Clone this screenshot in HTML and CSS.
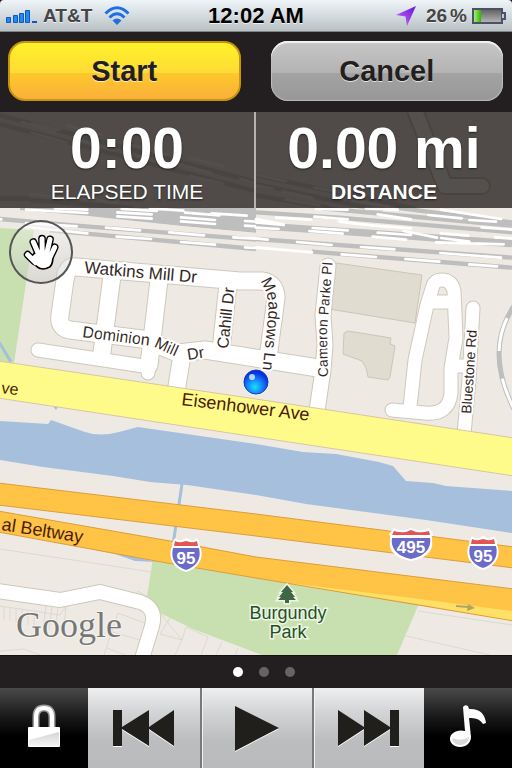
FILE: index.html
```
<!DOCTYPE html>
<html lang="en">
  <head>
    <meta charset="UTF-8" />
    <meta name="viewport" content="width=device-width, initial-scale=1.0" />
    <title>Run Tracker</title>
    <link rel="stylesheet" href="styles.css">
  </head>
  <body>
    <header class="status-bar">
      <div class="status-left">
        <svg class="signal" width="31" height="15" viewBox="0 0 31 15" aria-hidden="true">
          <g fill="#1b8cf5" stroke="#1455c0">
            <path d="M.5 9.5h4v5h-4zM7.500 7.500h4v7h-4zM13.500 5.500h4v9h-4zM19.500 2.500h4v12h-4z" />
          </g>
          <path fill="#1455c0" d="M26 13h5v2h-5z" />
        </svg>
        <span class="carrier">AT&amp;T</span>
        <svg class="wifi" width="26" height="20" viewBox="0 0 26 20" aria-hidden="true">
          <g fill="none" stroke="#1d6fe6" stroke-width="3">
            <path d="M1.500 7.500Q13-4 24.500 7.500" />
            <path d="M5.500 11.500Q13 4 20.500 11.500" />
          </g>
          <path fill="#1d6fe6" d="M8.500 14.500Q13 10.500 17.500 14.500L13 19z" />
        </svg>
      </div>
      <time class="clock">12:02 AM</time>
      <div class="status-right">
        <svg class="location" width="20" height="20" viewBox="0 0 20 20" aria-hidden="true">
          <defs>
            <linearGradient id="loc" x1="1" y1="0" x2="0" y2="1">
              <stop offset="0" stop-color="#6a12d8" />
              <stop offset="1" stop-color="#c574f7" />
            </linearGradient>
          </defs>
          <path fill="url(#loc)" d="M20 0L11 20L9.500 10.500L0 9z" />
        </svg>
        <span class="percent"><span>26</span><span>%</span></span>
        <svg class="battery" width="34" height="16" viewBox="0 0 34 16" aria-hidden="true">
          <defs>
            <linearGradient id="cell" x1="0" y1="0" x2="0" y2="1">
              <stop offset="0" stop-color="#5e5e5e" />
              <stop offset="1" stop-color="#b9b9b9" />
            </linearGradient>
            <linearGradient id="charge">
              <stop offset="0" stop-color="#a4ec70" />
              <stop offset="1" stop-color="#2fb60c" />
            </linearGradient>
          </defs>
          <rect x="1" y="1" width="29" height="14" fill="url(#cell)" stroke="#4b5267" stroke-width="2" />
          <rect x="2" y="2" width="7" height="12" fill="url(#charge)" />
          <path d="M30 5h3v6h-3" fill="#c3c9d2" stroke="#4b5267" stroke-width="2" />
        </svg>
      </div>
    </header>

    <nav class="actions">
      <button class="action start" type="button">Start</button>
      <button class="action cancel" type="button">Cancel</button>
    </nav>

    <main class="map">
      <svg class="map-canvas" viewBox="0 112 512 543" role="img" aria-label="Map">
        <defs>
          <radialGradient id="ball" cx="45%" cy="70%" r="60%">
            <stop offset="0" stop-color="#19e0ff" />
            <stop offset=".5" stop-color="#1487ff" />
            <stop offset="1" stop-color="#0730e0" />
          </radialGradient>
          <path id="dominion" d="M82 337L152 346L194 365" />
          <path id="meadows" d="M260 281Q271 297 268 318L261 384" />
          <path id="cameron" d="M328 377L327 330L333 255" />
          <symbol id="shield" viewBox="0 0 32 34">
            <path fill="#fff" d="M5 0Q8 3 12 2L16 0L20 2Q24 3 27 0L30 5Q29 8 31 11C34 23 26 31 16 34C6 31-2 23 1 11Q3 8 2 5z" />
            <path fill="#e25553" d="M5 3Q9 5 12 4L16 3L20 4Q23 5 27 3L28 8H4z" />
            <path fill="#6b6cca" d="M3 10H29C32 22 25 29 16 32C7 29 0 22 3 10z" />
          </symbol>
        </defs>

        <rect y="112" width="512" height="543" fill="#eeeae3" />

        <!-- Parks -->
        <path class="park" d="M0 228L34 230L14 363L0 361zM153 558L418 598V606L397 655H262L193 629L160 613L147 597z" />

        <!-- Rail yard under the stats panel -->
        <svg x="0" y="108" width="256" height="130" viewBox="0 0 768 390" overflow="visible">
          <path class="rail faint" d="M0 22L768 222M0 48L768 250M0 272H90M90 276L400 300" stroke-width="14" />
          <path class="dash faint" d="M97 46L178 66M200 52L305 80M95 74L200 104M65 42L165 72M240 96L340 128M400 112L500 140M570 150L670 175M530 166L632 194M570 204L670 226M410 145L480 165M720 212L768 226M90 258L200 270M230 270L350 284" />
        </svg>
        <svg x="256" y="108" width="256" height="130" viewBox="0 0 768 390" overflow="visible">
          <path class="rail faint" d="M0 202L480 302M0 228L380 310M0 262L220 300" stroke-width="14" />
          <path class="dash faint" d="M0 200L90 220M175 238L270 256M0 232L50 242M80 250L170 270M90 275L190 292M280 276L400 296" />
        </svg>

        <!-- Rail yard -->
        <svg x="0" y="205" width="256" height="190" viewBox="0 0 768 570" overflow="visible">
          <path class="rail-bed" d="M60 8H768V85L540 62L350 42L260 32L60 15z" />
          <path class="rail" d="M0 42L230 62L768 104M150 76L768 132" stroke-width="13" />
          <path class="edge" d="M0 28L260 44L540 68L768 88" stroke="#eeeae3" stroke-width="10" />
          <path class="dash" d="M78 14L262 24M165 10L262 14M352 22L455 28M352 34L455 41M365 12L470 18M555 23L658 31M543 37L645 45M543 49L645 57M450 10L550 17M635 25L740 32M735 48L768 50M735 62L768 64M78 54L230 64M0 43H4M318 68L420 76M508 82L612 91M700 97L768 101M78 66L262 85M350 95L453 102M543 111L645 119M735 127L768 129" />
        </svg>
        <svg x="256" y="205" width="256" height="190" viewBox="0 0 768 570" overflow="visible">
          <path class="rail" d="M0 22L250 38L768 82M200 10L768 62M0 102L768 158M168 140L768 188M420 8L768 52" stroke-width="13" />
          <path class="rail" d="M0 62L360 86L768 116" stroke-width="22" />
          <path class="dash" d="M60 38L165 44M175 35L275 43M365 28L465 43M555 14L735 42M640 45L720 50M517 30L617 40M677 67L768 74M555 85L637 92M718 97L768 100M555 99L640 110M540 112L743 118M365 83L465 90M350 95L450 104M443 78L543 98M160 78L260 86M170 69L275 76M250 50L355 62M355 62L465 70M0 42L83 58M0 52L83 60M0 68L68 72M0 100L35 104M123 111L227 120M315 126L415 133M553 144L735 158M0 127L65 133M65 133L168 142M257 148L360 156M448 162L550 170M640 178L723 184M180 12L275 14M330 10L425 14" />
        </svg>
        <path fill="none" stroke="#bebebe" stroke-width="5" d="M514 306Q484 350 514 409" />
        <path fill="none" stroke="#fff" stroke-width="3" stroke-dasharray="34 28" stroke-dashoffset="48" d="M514 306Q484 350 514 409" />

        <!-- Buildings -->
        <path class="building" d="M336 263L422 275L415 323L329 309zM348 331L391 338L390 344L395 346L390 377L388 380L368 377L366 368L362 361L343 354L344 333z" />

        <!-- Lot lines -->
        <path class="lot" d="M0 549L152 572M418 611L512 625M406 636L490 655M0 606L60 615L66 606M4 607V620M10 608V621M16 609V622M22 610V624M28 611V625M34 612V626M46 606L43 628M52 607L49 630M58 608L55 630M66 606L64 626M118 613L158 628M118 613L104 655M112 632L140 640M107 648L125 655M130 608L138 591L152 600M160 613L182 640L175 655M182 640L186 627L208 637M170 618L160 634L182 640M208 637L201 655M222 642L216 655M238 648L235 655M0 651L24 649L40 655" />

        <!-- Streets: casing first, then the white fill -->
        <g class="casing">
          <path stroke-width="19" d="M228 284L221 350M112 276L102 352M159 280L149 365M182 355L176 392M66 273L60 315Q58 328 70 330L142 339L178 353L205 350L318 368M66 276Q68 265 76 267L240 281H262Q276 283 276 298L268 358" />
          <path stroke-width="15" d="M38 350L150 367M148 358V373" />
          <path stroke-width="17" d="M328 266L323 315L325 345L323 370L317 411" />
          <path stroke-width="15" d="M410 407L415 360L427 305L432 289Q434 279 443 280Q452 281 454 291L456 338L451 368V393Q449 415 425 413L392 410M430 302H454" />
          <path stroke-width="15" d="M473 308L469 380L464 434M456 366H468" />
          <path stroke-width="16" d="M-9 590L60 600L100 592L140 602Q157 608 152 626L141 662" />
          <path stroke-width="18" d="M414 108L445 186H482" />
        </g>
        <g class="street">
          <path stroke-width="17" d="M228 284L221 350M112 276L102 352M159 280L149 365M182 355L176 392M66 273L60 315Q58 328 70 330L142 339L178 353L205 350L318 368M66 276Q68 265 76 267L240 281H262Q276 283 276 298L268 358" />
          <path stroke-width="13" d="M38 350L150 367M148 358V373" />
          <path stroke-width="15" d="M328 266L323 315L325 345L323 370L317 411" />
          <path stroke-width="13" d="M410 407L415 360L427 305L432 289Q434 279 443 280Q452 281 454 291L456 338L451 368V393Q449 415 425 413L392 410M430 302H454" />
          <path stroke-width="13" d="M473 308L469 380L464 434M456 366H468" />
          <path stroke-width="14" d="M-9 590L60 600L100 592L140 602Q157 608 152 626L141 662" />
          <path stroke-width="14" d="M414 108L445 186H482" />
        </g>

        <!-- Water -->
        <path class="water" d="M0 421L48 424L51 420L85 432Q100 437 119 432L138 427L256 444L303 452L336 454L379 462L393 466L406 481L433 483L446 486L512 491V533L426 520L306 504L256 495L187 485L150 482L113 476L43 467L0 460zM52 405L58 407L56 410zM90 549L115 551L135 557L157 562L135 561L115 554z" />
        <path class="stream" d="M182 484L173 545M-1 342L11 362" />

        <!-- Main roads -->
        <path class="avenue" d="M-2 361L256 399L514 438V476L256 437L-2 398z" />
        <path class="highway" d="M-2 483L256 514L514 547V568L256 536L-2 505zM-2 511L170 541L256 557L514 589V621L256 578L167 563L-2 532z" />
        <path fill="#ffe066" d="M289 583L420 599L512 611V620L418 604z" />
        <path fill="none" stroke="#aaa763" stroke-width="2" d="M456 606L468 607" />
        <path fill="#aaa763" d="M468 604L475 608L467 611z" />

        <!-- Shields -->
        <use href="#shield" x="170" y="538" width="32" height="34" />
        <use href="#shield" x="467" y="536" width="32" height="34" />
        <path fill="#fff" d="M394 528Q399 531 405 530L411 528L417 530Q424 531 429 528L433 534Q431 537 432 541C434 552 424 559 411 561C398 559 388 552 390 541Q391 537 389 534z" />
        <path fill="#e25553" d="M394 531Q400 533 406 532L411 530L416 532Q423 533 429 531L430 535H392z" />
        <path fill="#6b6cca" d="M392 538H430C432 550 422 557 411 559C400 557 390 550 392 538z" />
        <g class="route">
          <text x="186" y="564">95</text>
          <text x="483" y="562">95</text>
          <text x="411" y="553">495</text>
        </g>

        <!-- Street names -->
        <g class="name">
          <text font-size="17" transform="translate(84 273) rotate(5)">Watkins Mill Dr</text>
          <text font-size="16"><textPath href="#dominion">Dominion Mill</textPath></text>
          <text font-size="16" transform="translate(188 360) rotate(-9)">Dr</text>
          <text font-size="16" transform="translate(228 349) rotate(-84)">Cahill Dr</text>
          <text font-size="16"><textPath href="#meadows">Meadows Ln</textPath></text>
          <text font-size="14"><textPath href="#cameron">Cameron Parke Pl</textPath></text>
          <text font-size="14" transform="translate(471 414) rotate(-86)">Bluestone Rd</text>
        </g>
        <g class="name on-road">
          <text transform="translate(181 405) rotate(7)">Eisenhower Ave</text>
          <text font-size="16" transform="translate(1 393) rotate(7)">ve</text>
          <text transform="translate(1 530) rotate(9)">al Beltway</text>
        </g>

        <!-- Park label -->
        <path fill="#3f6745" stroke="#eef5e4" stroke-width="3" paint-order="stroke" d="M287 585L293 592H291L295 597H293L296 600H289V603H285V600H278L281 597H279L283 592H281z" />
        <g class="park-name">
          <text x="288" y="619">Burgundy</text>
          <text x="288" y="638">Park</text>
        </g>
        <text class="attribution" x="16" y="637">Google</text>

        <!-- Current position -->
        <circle cx="256" cy="382" r="12" fill="url(#ball)" stroke="#1038c8" />
        <circle cx="252" cy="377" r="3" fill="#d8f4ff" opacity=".8" />
      </svg>

      <section class="stats">
        <div class="stat">
          <strong>0:00</strong>
          <span>ELAPSED TIME</span>
        </div>
        <div class="stat selected">
          <strong>0.00 mi</strong>
          <span>DISTANCE</span>
        </div>
      </section>

      <button class="pan" type="button" aria-label="Pan map">
        <svg width="64" height="64" viewBox="0 0 192 192" aria-hidden="true">
          <g fill="none" stroke-linecap="round">
            <path stroke="#000" stroke-width="23" d="M124 110L137 82M114 100L123 58M100 100L99 56M89 104L73 66M76 124L56 104" />
            <path fill="#fff" stroke="#000" stroke-width="5" stroke-linejoin="round" d="M78 98L131 100Q134 132 122 141Q98 154 83 139L60 116z" />
            <path stroke="#fff" stroke-width="15" d="M122 114L137 82M112 105L123 58M100 105L99 56M91 108L73 66M80 128L56 104" />
            <path fill="#fff" d="M84 95L126 98Q131 127 119 138Q99 149 85 136L72 118z" />
          </g>
        </svg>
      </button>
    </main>

    <div class="pager">
      <span class="dot current"></span>
      <span class="dot"></span>
      <span class="dot"></span>
    </div>

    <footer class="player">
      <button class="key dark" type="button" aria-label="Lock">
        <svg width="34" height="44" viewBox="0 0 34 44" aria-hidden="true">
          <defs>
            <linearGradient id="gloss" x1="0" y1="0" x2="0" y2="1">
              <stop offset="0" stop-color="#d4d4d4" />
              <stop offset="1" stop-color="#f4f4f4" />
            </linearGradient>
          </defs>
          <path fill="none" stroke="#999" stroke-width="7" d="M9 24V13Q9 4 17 4T25 13V24" />
          <path fill="none" stroke="#fff" stroke-width="4" d="M9 24V13Q9 4 17 4T25 13V24" />
          <rect x="1" y="23" width="32" height="20" rx="1" fill="#fff" />
          <path fill="url(#gloss)" d="M2 36L32 28V42H2z" />
        </svg>
      </button>
      <button class="key" type="button" aria-label="Previous">
        <svg width="62" height="36" viewBox="0 0 62 36" aria-hidden="true">
          <path d="M0 0H9V17L36 0V17L61 0V36L36 19V36L9 19V36H0z" />
        </svg>
      </button>
      <button class="key" type="button" aria-label="Play">
        <svg width="44" height="45" viewBox="0 0 44 45" aria-hidden="true">
          <path d="M0 0L44 22L0 45z" />
        </svg>
      </button>
      <button class="key" type="button" aria-label="Next">
        <svg width="62" height="36" viewBox="0 0 62 36" aria-hidden="true">
          <path d="M0 0L26 17V0L52 17V0H61V36H52V19L26 36V19L0 36z" />
        </svg>
      </button>
      <button class="key dark" type="button" aria-label="Music">
        <svg width="38" height="44" viewBox="0 0 38 44" aria-hidden="true">
          <path fill="#fff" d="M14 3Q16 0 19 2L20 5Q35 4 37 19L34 20Q30 13 20 14L22 33C22 39 17 43 11 43C5 43 1 39 1 35C1 29 8 25 16 27z" />
          <path fill="#d9d9d9" d="M3 34Q12 38 20 33Q19 41 11 41Q4 41 3 34z" />
        </svg>
      </button>
    </footer>
  </body>
</html>
```
FILE: styles.css
```
* {
  box-sizing: border-box;
}

body {
  display: flex;
  flex-direction: column;
  min-height: 100vh;
  margin: 0;
  background: #231f20;
  font-family: 'Liberation Sans', Arial, sans-serif;
}

button {
  margin: 0;
  padding: 0;
  border: 0;
  font: inherit;
}

svg {
  display: block;
}

/* Status bar */
.status-bar {
  display: grid;
  grid-template-columns: 1fr auto 1fr;
  align-items: center;
  height: 32px;
  padding: 0 6px;
  background: linear-gradient(#eef4f7, #d5dce0 50%, #b8c0c4);
  border-bottom: 1px solid #7d8488;
  border-radius: 4px 4px 0 0;
  color: #000;
  text-shadow: 0 1px 0 rgba(255, 255, 255, 0.7);
}

.status-left,
.status-right {
  display: flex;
  align-items: center;
}

.status-right {
  justify-content: flex-end;
}

.carrier,
.percent {
  color: #454545;
  font-size: 19px;
  font-weight: bold;
}

.carrier {
  margin: 0 12px 0 6px;
}

.percent {
  display: flex;
  gap: 3px;
  margin: 0 5px 0 10px;
}

.clock {
  font-size: 22px;
  font-weight: bold;
}

/* Start / Cancel */
.actions {
  display: grid;
  grid-template-columns: 1fr 1fr;
  gap: 30px;
  padding: 9px 9px 11px 8px;
}

.action {
  height: 60px;
  border-radius: 17px;
  color: #231f20;
  font-size: 29px;
  font-weight: bold;
  text-shadow: 0 1px 0 rgba(255, 255, 255, 0.7);
}

.start {
  background: linear-gradient(#fff12a, #fedb35 53%, #fdc82b 54%, #fbb03b);
  border: 2px solid #c8930f;
}

.cancel {
  background: linear-gradient(#c7c7c7, #b3b3b3 53%, #a3a3a3 54%, #979797);
  box-shadow: inset 0 2px 1px #f4f4f4, inset 0 0 1px 1px #b8b8b8;
}

/* Map, with the stats and the pan button stacked on it */
.map {
  display: grid;
  flex: 1;
  position: relative;
  background: #eeeae3;
}

.map-canvas,
.stats {
  grid-area: 1 / 1;
}

.map-canvas {
  width: 100%;
}

.park {
  fill: #c8dfb0;
}

.rail,
.rail-bed {
  fill: none;
  stroke: #bebebe;
}

.rail-bed {
  fill: #bebebe;
  stroke: none;
}

.edge {
  fill: none;
}

.dash {
  fill: none;
  stroke: #fff;
  stroke-width: 8;
  stroke-linecap: round;
}

.faint {
  opacity: 0.7;
}

.building {
  fill: #e0dcd0;
  stroke: #cbc6b9;
}

.lot {
  fill: none;
  stroke: #dcd8d2;
}

.casing,
.street {
  fill: none;
  stroke-linecap: round;
  stroke-linejoin: round;
}

.casing {
  stroke: #cdc8bc;
}

.street {
  stroke: #fff;
}

.water {
  fill: #a5bfdd;
}

.stream {
  fill: none;
  stroke: #a5bfdd;
  stroke-width: 3px;
}

.avenue {
  fill: #fffb8b;
  stroke: #d8c6a0;
}

.highway {
  fill: #ffc345;
  stroke: #dc9d3a;
}

.route {
  fill: #fff;
  font-size: 17px;
  font-weight: bold;
  text-anchor: middle;
}

.name {
  fill: #33281f;
  stroke: #fff;
  stroke-width: 4px;
  stroke-linejoin: round;
  paint-order: stroke;
}

.on-road {
  fill: #4a1c05;
  stroke: none;
  font-size: 18px;
}

.park-name {
  fill: #1f5126;
  stroke: #eef5e4;
  stroke-width: 3px;
  paint-order: stroke;
  font-size: 18px;
  text-anchor: middle;
}

.attribution {
  fill: #777;
  stroke: #f6f4f0;
  stroke-width: 2px;
  paint-order: stroke;
  font-family: 'Liberation Serif', serif;
  font-size: 36px;
}

.stats {
  display: grid;
  grid-template-columns: 1fr 1fr;
  align-self: start;
  z-index: 1;
}

.stat {
  display: flex;
  flex-direction: column;
  align-items: center;
  height: 96px;
  padding-top: 7px;
  background: rgba(32, 27, 25, 0.77);
  color: #fff;
  text-shadow: 0 1px 2px rgba(0, 0, 0, 0.6);
}

.stat:first-child {
  border-right: 2px solid #b5b3b0;
}

.stat strong {
  font-size: 57px;
  line-height: 58px;
}

.stat span {
  font-size: 21px;
  line-height: 30px;
}

.selected span {
  font-weight: bold;
}

.pan {
  position: absolute;
  top: 108px;
  left: 9px;
  width: 64px;
  height: 64px;
  border-radius: 50%;
  background: linear-gradient(rgba(255, 255, 255, 0.4), rgba(190, 190, 190, 0.4));
  box-shadow: inset 0 0 0 2px #555;
}

/* Pager */
.pager {
  display: flex;
  justify-content: center;
  align-items: center;
  gap: 16px;
  height: 33px;
  padding-left: 16px;
  border-top: 1px solid #111;
}

.dot {
  width: 10px;
  height: 10px;
  border-radius: 50%;
  background: #666364;
}

.dot.current {
  background: #fff;
}

/* Player */
.player {
  display: grid;
  grid-template-columns: 88px 1fr 1fr 1fr 88px;
  height: 80px;
}

.key {
  display: flex;
  justify-content: center;
  align-items: center;
  background: linear-gradient(#efeff0, #d2d4d5 30%, #bbbdbf 65%, #b8babc);
  fill: #211f1c;
}

.key:not(.dark) svg {
  filter: drop-shadow(0 1px 0 #fff);
}

.key:not(.dark) + .key:not(.dark) {
  border-left: 2px solid #77797b;
  box-shadow: inset 1px 0 0 #f2f2f2;
}

.dark {
  padding-bottom: 4px;
  background: linear-gradient(#4a4a4a, #1a1a1a 35%, #000 60%);
}
```
